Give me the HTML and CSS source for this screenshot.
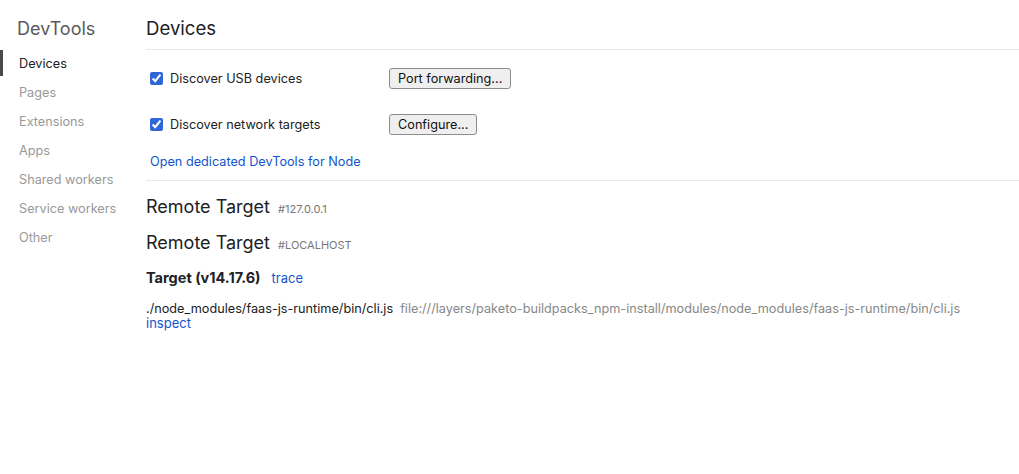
FILE: index.html
```html
<!DOCTYPE html>
<html>
<head>
<meta charset="utf-8">
<title>Inspect with Chrome Developer Tools</title>
<link rel="stylesheet" href="styles.css">
</head>
<body>
<div class="page">
  <nav class="sidebar">
    <div class="sidebar-title">DevTools</div>
    <ul class="nav">
      <li class="nav-item active">Devices</li>
      <li class="nav-item">Pages</li>
      <li class="nav-item">Extensions</li>
      <li class="nav-item">Apps</li>
      <li class="nav-item">Shared workers</li>
      <li class="nav-item">Service workers</li>
      <li class="nav-item">Other</li>
    </ul>
  </nav>
  <main class="content">
    <h1 class="page-title">Devices</h1>
    <section class="settings">
      <div class="setting-row">
        <label class="check"><input type="checkbox" checked><span>Discover USB devices</span></label>
        <button class="btn">Port forwarding...</button>
      </div>
      <div class="setting-row">
        <label class="check"><input type="checkbox" checked><span>Discover network targets</span></label>
        <button class="btn">Configure...</button>
      </div>
      <a class="link node-link" href="#">Open dedicated DevTools for Node</a>
    </section>
    <section class="targets">
      <h2 class="remote">Remote Target <span class="remote-id">#127.0.0.1</span></h2>
      <h2 class="remote">Remote Target <span class="remote-id">#LOCALHOST</span></h2>
      <div class="browser"><span class="browser-name">Target (v14.17.6)</span><a class="link trace" href="#">trace</a></div>
      <div class="target">
        <div class="target-line"><span class="target-name">./node_modules/faas-js-runtime/bin/cli.js</span><span class="target-url">file:///layers/paketo-buildpacks_npm-install/modules/node_modules/faas-js-runtime/bin/cli.js</span></div>
        <a class="link inspect" href="#">inspect</a>
      </div>
    </section>
  </main>
</div>
</body>
</html>
```

FILE: styles.css
```css
* { box-sizing: border-box; }
html, body { margin: 0; padding: 0; background: #fff; }
body {
  font-family: Inter, "Liberation Sans", Arial, sans-serif;
  font-size: 12.7px;
  color: #202124;
}
.page { display: flex; min-height: 474px; }

.sidebar { width: 146px; flex: none; }
.sidebar-title {
  padding: 9px 0 0 17px;
  line-height: 40px;
  font-size: 18px;
  color: #5a5a5a;
}
.nav { list-style: none; margin: 0; padding: 0; }
.nav-item {
  position: relative;
  padding-left: 19px;
  line-height: 29px;
  color: #999;
}
.nav-item.active { color: #202124; }
.nav-item.active::before {
  content: "";
  position: absolute;
  left: 0; top: 1px;
  width: 3px; height: 26px;
  background: #4a4a4a;
}

.content { flex: 1; min-width: 0; }
.page-title {
  margin: 0;
  padding-top: 9px;
  line-height: 38px;
  font-size: 18.6px;
  font-weight: normal;
  color: #202124;
  border-bottom: 1px solid #e8e8e8;
  height: 50px;
}
.settings {
  padding-top: 5px;
  padding-bottom: 10px;
  border-bottom: 1px solid #e8e8e8;
  display: flex;
  flex-direction: column;
  align-items: flex-start;
}
.setting-row {
  display: grid;
  grid-template-columns: 243px auto;
  align-items: center;
  height: 46px;
}
.check { display: flex; align-items: center; }
.check input {
  margin: 0 7px 0 4px;
  width: 13px; height: 13px;
  accent-color: #2f68d6;
}
.btn {
  font-family: inherit;
  font-size: 12.7px;
  color: #111;
  height: 21px;
  padding: 0 8px;
  background: #efefef;
  border: 1px solid #8c8c8c;
  border-radius: 3px;
  line-height: 19px;
}
.link { color: #1155cc; text-decoration: none; }
.node-link { display: block; margin: 7px 0 0 4px; line-height: 16px; }

.targets { padding-top: 8px; }
.remote {
  margin: 0;
  font-size: 18px;
  font-weight: normal;
  line-height: 36px;
  height: 36px;
  color: #202124;
}
.remote-id {
  font-size: 11px;
  color: #777;
  margin-left: 3px;
}
.browser {
  margin-top: 7px;
  line-height: 20px;
  height: 20px;
  display: flex;
  align-items: baseline;
}
.browser-name { font-weight: 700; font-size: 14.5px; }
.trace { margin-left: 11px; font-size: 13px; }
.target { margin-top: 13px; }
.target-line { line-height: 15px; }
.target-url { color: #888; margin-left: 7px; }
.inspect { display: block; line-height: 15px; font-size: 13px; }
```
